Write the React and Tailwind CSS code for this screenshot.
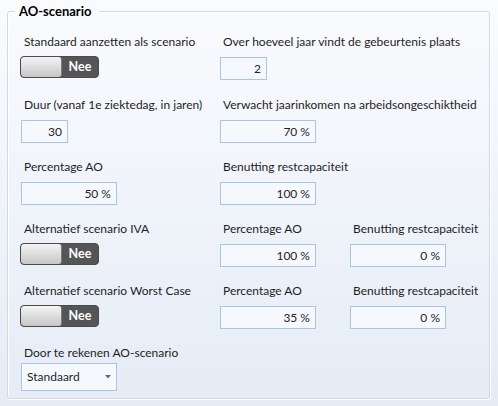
import React from "react";

const font = { fontFamily: "Lato, 'Noto Sans', sans-serif" };

const Toggle = () => (
  <div className="flex h-[22px] w-[79px] overflow-hidden rounded-[4px] border border-[#4a4a4a] bg-[#555555]">
    <div className="w-[41px] rounded-[3px] border-r border-[#7d7d7d] bg-gradient-to-b from-[#f4f4f4] to-[#c6c6c6]" />
    <div className="flex flex-1 items-center justify-center text-[12.5px] font-bold text-white">Nee</div>
  </div>
);

const Field = ({ value, w = "w-[96px]" }) => (
  <div
    className={`mt-px flex h-[23px] ${w} items-center justify-end border border-[#a9c5e3] bg-[#f5f9fe] pr-[5px] text-[12px] text-[#1e1e1e]`}
  >
    {value}
  </div>
);

const Label = ({ children }) => (
  <div className="h-4 whitespace-nowrap pl-[3px] text-[12px] leading-4 text-[#1e1e1e]">{children}</div>
);

const Cell = ({ label, children }) => (
  <div className="flex flex-col gap-[6px]">
    <Label>{label}</Label>
    {children}
  </div>
);

export default function App() {
  return (
    <div className="h-[406px] w-[498px] bg-gradient-to-b from-[#fafbfe] to-[#e5ecf6] pt-[3px]" style={font}>
      <fieldset className="ml-[7px] h-[396px] w-[483px] rounded-[3px] border border-[#d3d9e1] shadow-[1px_1px_0_#ffffff,inset_1px_1px_0_#ffffff]">
        <legend className="ml-[7px] pl-[4px] pr-[8px] text-[13px] font-bold leading-4 text-black">AO-scenario</legend>
        <div className="flex flex-col pl-[13px] pt-[15px]">
          <div className="grid h-[63px] grid-cols-[199px_130px_1fr]">
            <Cell label="Standaard aanzetten als scenario">
              <div className="-ml-px"><Toggle /></div>
            </Cell>
            <Cell label="Over hoeveel jaar vindt de gebeurtenis plaats">
              <Field value="2" w="w-[47px]" />
            </Cell>
          </div>
          <div className="grid h-[62px] grid-cols-[199px_130px_1fr]">
            <Cell label="Duur (vanaf 1e ziektedag, in jaren)">
              <Field value="30" w="w-[47px]" />
            </Cell>
            <Cell label="Verwacht jaarinkomen na arbeidsongeschiktheid">
              <Field value="70 %" />
            </Cell>
          </div>
          <div className="grid h-[62px] grid-cols-[199px_130px_1fr]">
            <Cell label="Percentage AO">
              <Field value="50 %" />
            </Cell>
            <Cell label="Benutting restcapaciteit">
              <Field value="100 %" />
            </Cell>
          </div>
          <div className="grid h-[62px] grid-cols-[199px_130px_1fr]">
            <Cell label="Alternatief scenario IVA">
              <div className="-ml-px"><Toggle /></div>
            </Cell>
            <Cell label="Percentage AO">
              <Field value="100 %" />
            </Cell>
            <Cell label="Benutting restcapaciteit">
              <Field value="0 %" />
            </Cell>
          </div>
          <div className="grid h-[62px] grid-cols-[199px_130px_1fr]">
            <Cell label="Alternatief scenario Worst Case">
              <div className="-ml-px"><Toggle /></div>
            </Cell>
            <Cell label="Percentage AO">
              <Field value="35 %" />
            </Cell>
            <Cell label="Benutting restcapaciteit">
              <Field value="0 %" />
            </Cell>
          </div>
          <div className="flex flex-col gap-[2px]">
            <Label>Door te rekenen AO-scenario</Label>
            <div className="flex h-[28px] w-[96px] items-center justify-between border border-[#a9c5e3] bg-[#f5f9fe] pl-[5px] pr-[5px] text-[12px] text-[#1e1e1e]">
              <span>Standaard</span>
              <svg width="6" height="4" viewBox="0 0 6 4">
                <path d="M0 0h6L3 3.5z" fill="#6b6b6b" />
              </svg>
            </div>
          </div>
        </div>
      </fieldset>
    </div>
  );
}
